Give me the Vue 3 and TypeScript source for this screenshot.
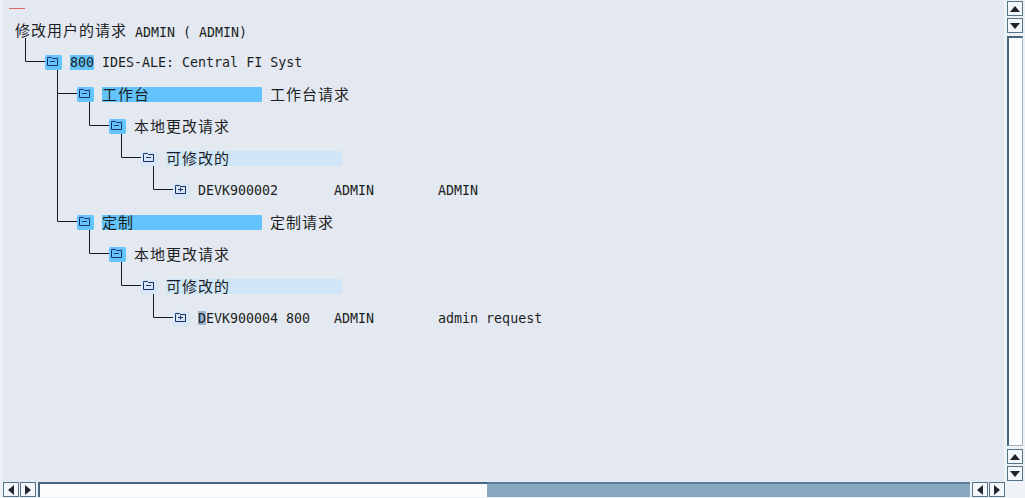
<script setup lang="ts">
import { computed } from 'vue'

type Piece = { text: string; cjk?: boolean; mark?: boolean; caret?: boolean }
type Row = {
  depth: number
  parent?: number
  icon?: 'strong' | 'soft' | 'leaf'
  label: Piece[]
  bar?: 'strong' | 'soft'
  note?: string
  cols?: string[]
}

const ROW_H = 32
const NODE_TOP = 8

const rows: Row[] = [
  {
    depth: 0,
    label: [
      { text: '修改用户的请求', cjk: true },
      { text: ' ADMIN ( ADMIN)' }
    ]
  },
  {
    depth: 1,
    parent: 0,
    icon: 'strong',
    label: [{ text: '800', mark: true }, { text: ' IDES-ALE: Central FI Syst' }]
  },
  { depth: 2, parent: 1, icon: 'strong', label: [{ text: '工作台', cjk: true }], bar: 'strong', note: '工作台请求' },
  { depth: 3, parent: 2, icon: 'strong', label: [{ text: '本地更改请求', cjk: true }] },
  { depth: 4, parent: 3, icon: 'soft', label: [{ text: '可修改的', cjk: true }], bar: 'soft' },
  { depth: 5, parent: 4, icon: 'leaf', label: [{ text: 'DEVK900002' }], cols: ['', 'ADMIN', 'ADMIN'] },
  { depth: 2, parent: 1, icon: 'strong', label: [{ text: '定制', cjk: true }], bar: 'strong', note: '定制请求' },
  { depth: 3, parent: 6, icon: 'strong', label: [{ text: '本地更改请求', cjk: true }] },
  { depth: 4, parent: 7, icon: 'soft', label: [{ text: '可修改的', cjk: true }], bar: 'soft' },
  {
    depth: 5,
    parent: 8,
    icon: 'leaf',
    label: [{ text: 'D', caret: true }, { text: 'EVK900004' }],
    cols: ['800', 'ADMIN', 'admin request']
  }
]

const iconX = (depth: number) => 45 + (depth - 1) * 32

const indent = (row: Row) => ({
  paddingLeft: `${row.depth === 0 ? 15 : iconX(row.depth)}px`
})

// Elbow connectors from each parent down to its child's icon
const connectors = computed(() =>
  rows
    .map((row, i) => {
      if (row.parent === undefined) return ''
      const x = row.depth === 1 ? 25.5 : iconX(row.depth - 1) + 12.5
      const y0 = NODE_TOP + row.parent * ROW_H + 15
      const y1 = NODE_TOP + i * ROW_H + 6.5
      return `M${x} ${y0}V${y1}H${iconX(row.depth)}`
    })
    .join('')
)
</script>

<template>
  <div class="window">
    <main class="canvas">
      <div class="stamp"></div>
      <div class="tree">
        <svg class="lines" width="300" height="340" viewBox="0 0 300 340">
          <path :d="connectors" fill="none" stroke="#10182a" stroke-width="1" />
        </svg>
        <div v-for="(row, i) in rows" :key="i" class="row" :style="indent(row)">
          <span v-if="row.icon" class="node" :class="row.icon">
            <svg width="17" height="15" viewBox="0 0 17 15">
              <path d="M2.5 3.5V2.5H6.5L7.5 3.5H12.5V10.5H2.5Z" fill="none" stroke="#16306a" />
              <path v-if="row.icon !== 'leaf'" d="M5 6.5H10" stroke="#16306a" />
              <path v-else d="M5 6.5H10M7.5 4.5V8.5" stroke="#16306a" />
            </svg>
          </span>
          <span class="label" :class="row.bar ? `bar ${row.bar}` : ''">
            <span
              v-for="(p, j) in row.label"
              :key="j"
              :class="{ cjk: p.cjk, mark: p.mark, caret: p.caret }"
            >{{ p.text }}</span>
          </span>
          <span v-if="row.note" class="note cjk">{{ row.note }}</span>
          <template v-if="row.cols">
            <span class="col client">{{ row.cols[0] }}</span>
            <span class="col owner">{{ row.cols[1] }}</span>
            <span class="col">{{ row.cols[2] }}</span>
          </template>
        </div>
      </div>
    </main>

    <aside class="vbar">
      <button class="btn"><svg width="10" height="6" viewBox="0 0 10 6"><path d="M5 0L10 6H0Z" /></svg></button>
      <button class="btn"><svg width="10" height="6" viewBox="0 0 10 6"><path d="M0 0H10L5 6Z" /></svg></button>
      <div class="vthumb"></div>
      <button class="btn"><svg width="10" height="6" viewBox="0 0 10 6"><path d="M5 0L10 6H0Z" /></svg></button>
      <button class="btn"><svg width="10" height="6" viewBox="0 0 10 6"><path d="M0 0H10L5 6Z" /></svg></button>
    </aside>

    <footer class="hbar">
      <button class="btn"><svg width="6" height="10" viewBox="0 0 6 10"><path d="M6 0V10L0 5Z" /></svg></button>
      <button class="btn"><svg width="6" height="10" viewBox="0 0 6 10"><path d="M0 0L6 5L0 10Z" /></svg></button>
      <div class="htrack">
        <div class="hthumb"></div>
        <div class="hrest"></div>
      </div>
      <button class="btn"><svg width="6" height="10" viewBox="0 0 6 10"><path d="M6 0V10L0 5Z" /></svg></button>
      <button class="btn"><svg width="6" height="10" viewBox="0 0 6 10"><path d="M0 0L6 5L0 10Z" /></svg></button>
    </footer>
  </div>
</template>

<style>
html,
body {
  margin: 0;
  overflow: hidden;
  background: #eef1f6;
}
</style>

<style scoped>
.window {
  width: 1025px;
  height: 498px;
  display: grid;
  grid-template-columns: 1006px 19px;
  grid-template-rows: 482px 16px;
  font-family: "DejaVu Sans Mono", "Noto Sans CJK SC", monospace;
  font-size: 13.3px;
  color: #1c1e24;
  background: #eef1f6;
}

.canvas {
  background: #e4e9f1;
  border-left: 2px solid #edf0f5;
  box-sizing: border-box;
  padding: 8px 0 0 7px;
  margin-right: 2px;
}

.stamp {
  width: 16px;
  height: 1px;
  background: #dd6a66;
}

.tree {
  position: relative;
  margin: 6px 0 0 -9px;
}

.lines {
  position: absolute;
  left: 0;
  top: 0;
  pointer-events: none;
}

.row {
  height: 32px;
  box-sizing: border-box;
  padding-top: 8px;
  display: flex;
  align-items: flex-start;
  white-space: pre;
  line-height: 15px;
}

.node {
  width: 17px;
  height: 15px;
  margin-right: 8px;
  border-radius: 2px;
  flex: none;
  display: flex;
}

.node.strong {
  background: #63c4fb;
}

.node.soft,
.node.leaf {
  background: #d6e6f5;
}

.label {
  display: block;
  height: 15px;
  line-height: 16px;
}

.bar.strong {
  width: 160px;
  background: #63c4fb;
}

.bar.soft {
  width: 176px;
  background: #cfe6f8;
}

.cjk {
  font-family: "Noto Sans CJK SC", sans-serif;
  font-size: 15px;
  letter-spacing: 1px;
  line-height: 13px;
  vertical-align: 1px;
}

.mark {
  background: #63c4fb;
  display: inline-block;
  height: 15px;
}

.caret {
  background: #9db4d2;
  display: inline-block;
  height: 14px;
}

.note {
  margin-left: 8px;
}

.col {
  line-height: 16px;
}

.col.client {
  margin-left: 8px;
  width: 48px;
}

.col.owner {
  width: 104px;
}

.btn {
  width: 16px;
  height: 15px;
  padding: 0;
  box-sizing: border-box;
  border: 1px solid #567287;
  background: #f3f6fa;
  display: flex;
  align-items: center;
  justify-content: center;
  flex: none;
}

.btn svg {
  fill: #20242e;
}

.vbar {
  display: flex;
  flex-direction: column;
  gap: 2px;
  padding: 1px 0 1px 1px;
  box-sizing: border-box;
}

.vthumb {
  flex: 1;
  width: 16px;
  margin: 1px 0;
  box-sizing: border-box;
  border: 1px solid #9fb2c2;
  border-top: 2px solid #45667f;
  border-left: 2px solid #45667f;
  background: #fbfcfe;
}

.hbar {
  grid-column: 1 / 3;
  display: flex;
  gap: 1px;
  padding-left: 3px;
  width: 1005px;
  box-sizing: border-box;
}

.htrack {
  width: 934px;
  margin: 0 1px;
  height: 15px;
  display: flex;
}

.hthumb {
  width: 449px;
  box-sizing: border-box;
  border-top: 2px solid #45667f;
  border-left: 2px solid #45667f;
  background: #fbfcfe;
}

.hrest {
  flex: 1;
  box-sizing: border-box;
  border-top: 2px solid #5d7b92;
  background: #88a8c0;
}
</style>
